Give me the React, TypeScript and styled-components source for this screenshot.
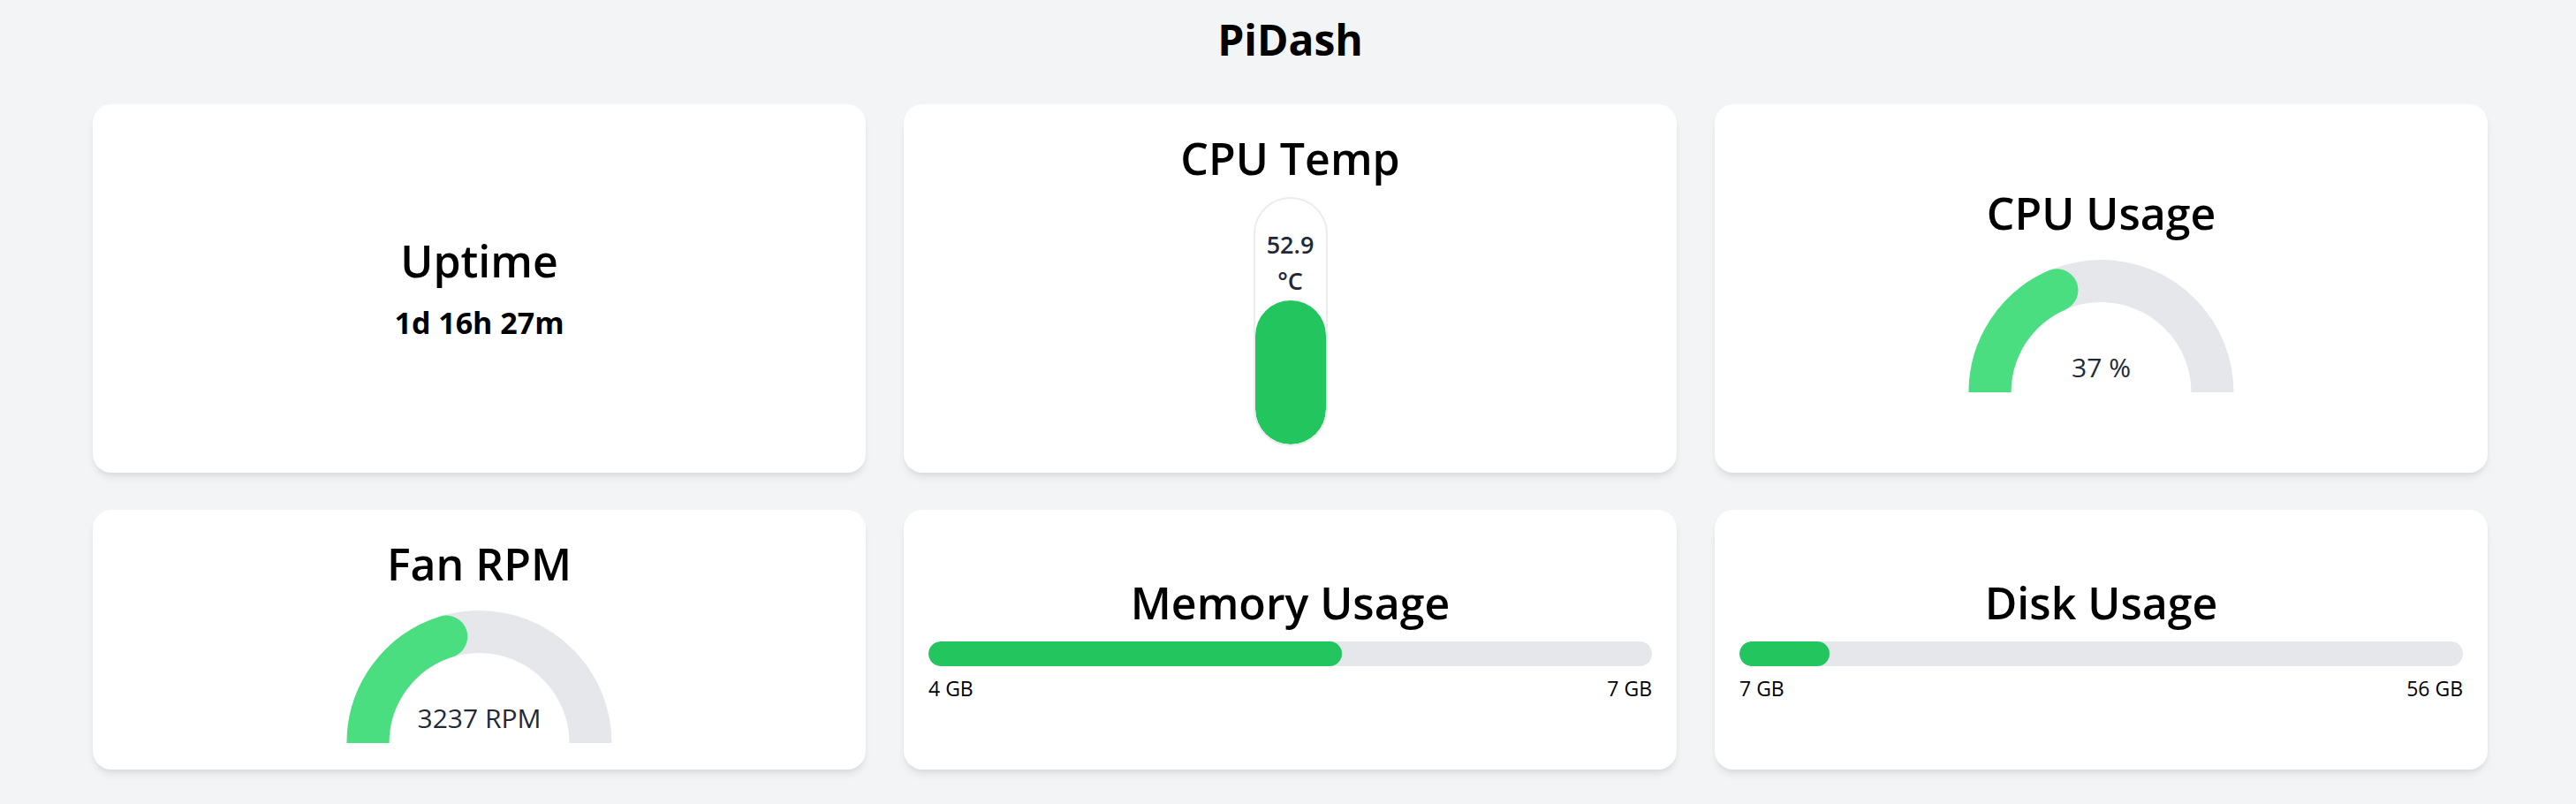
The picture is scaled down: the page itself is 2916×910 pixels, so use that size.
import React from "react";
import styled, { createGlobalStyle } from "styled-components";

const GlobalStyle = createGlobalStyle`
  html, body {
    margin: 0;
    padding: 0;
    background: #f3f4f6;
    font-family: "Open Sans", "Noto Sans", sans-serif;
    color: #000;
  }
`;

const Page = styled.div`
  padding: 17px 100px 40px 105px;
`;

const Header = styled.h1`
  margin: 0 0 45px;
  text-align: center;
  font-size: 48px;
  line-height: 56px;
  font-weight: 700;
`;

const Grid = styled.div`
  display: grid;
  grid-template-columns: repeat(3, 1fr);
  column-gap: 43px;
  row-gap: 42px;
`;

const Card = styled.div`
  background: #fff;
  border-radius: 21px;
  box-shadow: 0 7px 10px -2px rgba(0, 0, 0, 0.08), 0 3px 7px -3px rgba(0, 0, 0, 0.08);
  padding: 30px 28px;
  display: flex;
  flex-direction: column;
  align-items: center;
  justify-content: center;
`;

const CardTitle = styled.h2<{ $gap?: number }>`
  margin: 0 0 ${(p) => p.$gap ?? 12}px;
  font-size: 50px;
  line-height: 63px;
  font-weight: 600;
  text-align: center;
`;

const UptimeValue = styled.div`
  font-size: 34px;
  line-height: 49px;
  font-weight: 700;
  margin-top: 2px;
`;

/* thermometer */
const Tube = styled.div`
  position: relative;
  width: 84px;
  height: 282px;
  box-sizing: border-box;
  border: 2px solid #ebecef;
  border-radius: 999px;
  overflow: hidden;
`;

const TubeFill = styled.div`
  position: absolute;
  left: 0;
  right: 0;
  bottom: 0;
  background: #22c55e;
  border-radius: 999px;
`;

const TempLabel = styled.div`
  position: absolute;
  top: 31px;
  left: 0;
  right: 0;
  padding: 0 6px;
  z-index: 1;
  text-align: center;
  font-size: 27px;
  line-height: 41px;
  font-weight: 600;
  color: #1f2937;
`;

/* gauge */
const GaugeBox = styled.div`
  position: relative;
  width: 301px;
  height: 151px;
  margin-top: 8px;
`;

const GaugeLabel = styled.div`
  position: absolute;
  left: 0;
  right: 0;
  bottom: 7px;
  text-align: center;
  font-size: 30px;
  line-height: 42px;
  font-weight: 500;
  color: #1f2937;
`;

/* usage bar */
const BarBlock = styled.div`
  align-self: stretch;
`;

const BarTrack = styled.div`
  height: 28px;
  border-radius: 999px;
  background: #e5e7eb;
  overflow: hidden;
`;

const BarFill = styled.div`
  height: 100%;
  border-radius: 999px;
  background: #22c55e;
`;

const BarLabels = styled.div`
  display: flex;
  justify-content: space-between;
  margin-top: 8px;
  font-size: 23px;
  line-height: 35px;
  font-weight: 500;
`;

const Thermometer = ({ value, max }: { value: number; max: number }) => (
  <Tube>
    <TempLabel>{value} °C</TempLabel>
    <TubeFill style={{ height: `${(value / max) * 100}%` }} />
  </Tube>
);

const Gauge = ({ value, max, label }: { value: number; max: number; label: string }) => {
  const w = 301;
  const h = 151;
  const cx = w / 2;
  const cy = h;
  const r = 126;
  const p = Math.min(value / max, 1);
  const a = Math.PI - Math.PI * p;
  const ex = cx + r * Math.cos(a);
  const ey = cy - r * Math.sin(a);
  return (
    <GaugeBox>
      <svg width={w} height={h} viewBox={`0 0 ${w} ${h}`}>
        <path
          d={`M ${cx - r} ${cy} A ${r} ${r} 0 0 1 ${cx + r} ${cy}`}
          fill="none"
          stroke="#e5e7eb"
          strokeWidth={48}
        />
        <path
          d={`M ${cx - r} ${cy} A ${r} ${r} 0 0 1 ${ex} ${ey}`}
          fill="none"
          stroke="#4ade80"
          strokeWidth={48}
          strokeLinecap="round"
        />
      </svg>
      <GaugeLabel>{label}</GaugeLabel>
    </GaugeBox>
  );
};

const UsageBar = ({ used, total }: { used: number; total: number }) => (
  <BarBlock>
    <BarTrack>
      <BarFill style={{ width: `${(used / total) * 100}%` }} />
    </BarTrack>
    <BarLabels>
      <span>{used} GB</span>
      <span>{total} GB</span>
    </BarLabels>
  </BarBlock>
);

export default function App() {
  return (
    <>
      <GlobalStyle />
      <Page>
        <Header>PiDash</Header>
        <Grid>
          <Card>
            <CardTitle $gap={12}>Uptime</CardTitle>
            <UptimeValue>1d 16h 27m</UptimeValue>
          </Card>
          <Card>
            <CardTitle>CPU Temp</CardTitle>
            <Thermometer value={52.9} max={90} />
          </Card>
          <Card>
            <CardTitle>CPU Usage</CardTitle>
            <Gauge value={37} max={100} label="37 %" />
          </Card>
          <Card>
            <CardTitle>Fan RPM</CardTitle>
            <Gauge value={3237} max={8000} label="3237 RPM" />
          </Card>
          <Card>
            <CardTitle>Memory Usage</CardTitle>
            <UsageBar used={4} total={7} />
          </Card>
          <Card>
            <CardTitle>Disk Usage</CardTitle>
            <UsageBar used={7} total={56} />
          </Card>
        </Grid>
      </Page>
    </>
  );
}
